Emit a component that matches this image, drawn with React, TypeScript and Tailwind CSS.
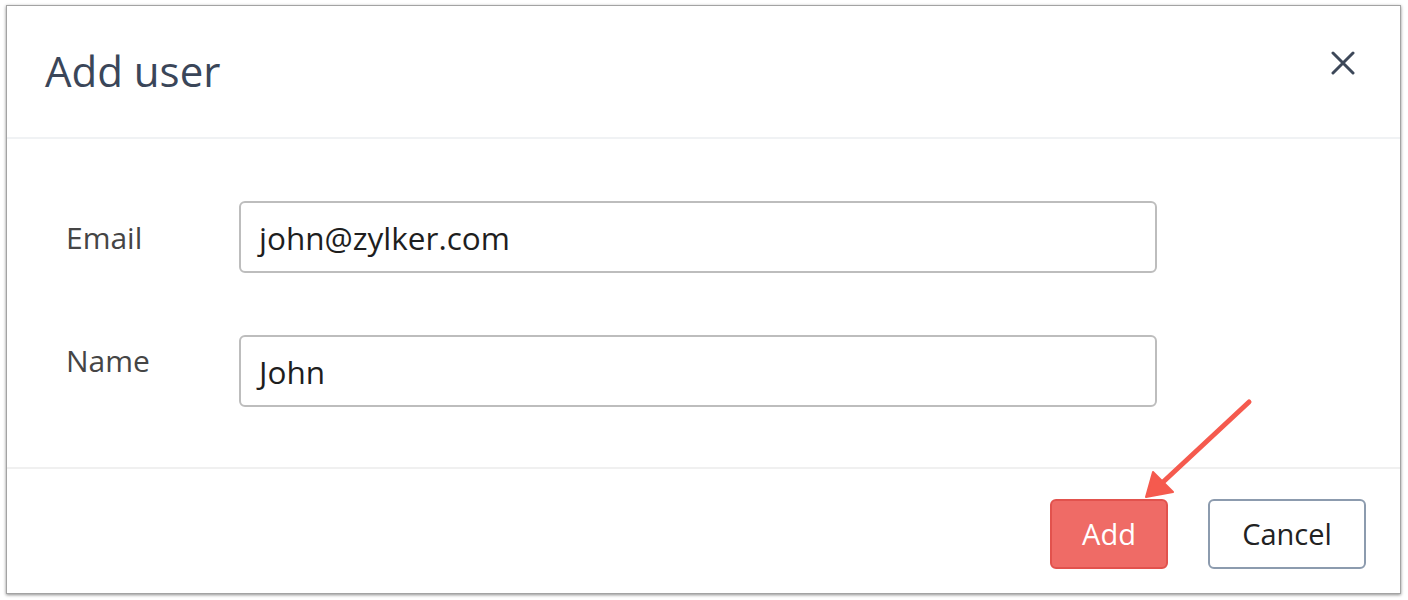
import React from "react";

export default function App() {
  return (
    <div className="relative w-[1408px] h-[600px] bg-white overflow-hidden" style={{ fontFamily: '"Open Sans", sans-serif' }}>
      <div className="absolute left-[6px] top-[5px] w-[1395px] h-[589px] bg-white border border-[#a3a3a3] shadow-[0_1px_3px_rgba(0,0,0,0.45)] flex flex-col">
        <div className="h-[133px] flex items-center justify-between pl-[38px] pr-[45px] border-b-2 border-[#f0f2f4] shrink-0">
          <div className="text-[42px] text-[#3a4659] leading-none pb-[2px]">Add user</div>
          <svg width="24" height="24" viewBox="0 0 24 24" className="mb-[18px]">
            <path d="M2 2 L22 22 M22 2 L2 22" stroke="#3d4859" strokeWidth="3" strokeLinecap="round" />
          </svg>
        </div>
        <div className="flex-1 flex flex-col justify-center gap-[62px] pl-[59px] pt-[2px]">
          <div className="flex items-center">
            <div className="w-[173px] text-[30px] text-[#454545]">Email</div>
            <div className="w-[918px] h-[72px] border-2 border-[#bdbdbd] rounded-[6px] flex items-center pl-[18px] pt-[2px] text-[31.5px] text-[#1e1e1e]">
              john@zylker.com
            </div>
          </div>
          <div className="flex items-center">
            <div className="w-[173px] text-[30px] text-[#454545] pb-[21px]">Name</div>
            <div className="w-[918px] h-[72px] border-2 border-[#bdbdbd] rounded-[6px] flex items-center pl-[18px] pt-[2px] text-[31.5px] text-[#1e1e1e]">
              John
            </div>
          </div>
        </div>
        <div className="h-[126px] border-t-2 border-[#f0f0f0] flex justify-end items-start pt-[30px] pr-[34px] gap-[40px] shrink-0">
          <div className="w-[118px] h-[70px] rounded-[6px] bg-[#ef6b66] border-2 border-[#e2524d] flex items-center justify-center text-white text-[29px]">
            Add
          </div>
          <div className="w-[158px] h-[70px] rounded-[6px] bg-white border-2 border-[#8c9bae] flex items-center justify-center text-[#222] text-[29px]">
            Cancel
          </div>
        </div>
      </div>
      <svg className="absolute left-0 top-0" width="1408" height="600" viewBox="0 0 1408 600">
        <line x1="1249" y1="402" x2="1162" y2="483" stroke="#f55a4e" strokeWidth="5" strokeLinecap="round" />
        <polygon points="1146,497 1153,472 1173,492" fill="#f55a4e" stroke="#f55a4e" strokeWidth="2" strokeLinejoin="round" />
      </svg>
    </div>
  );
}
